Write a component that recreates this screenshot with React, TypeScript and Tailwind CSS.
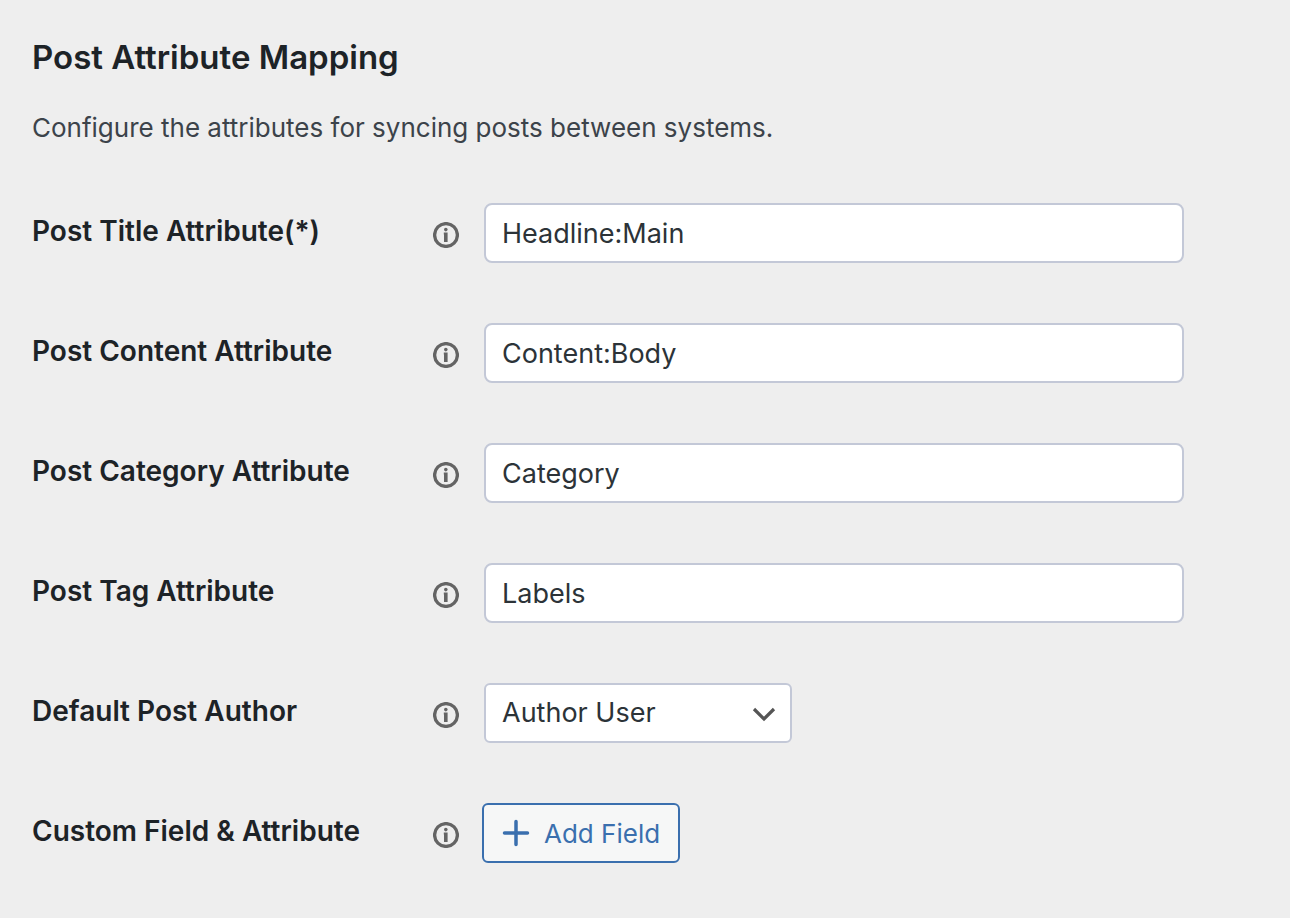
import { useState } from "react";
import type { ReactNode } from "react";

function InfoIcon() {
  return (
    <svg viewBox="0 0 26 26" className="size-[26px]" fill="none" aria-hidden="true">
      <circle cx="13" cy="13" r="11.4" stroke="#646464" strokeWidth="3.3" />
      <circle cx="12.8" cy="7.6" r="1.8" fill="#646464" />
      <path d="M10.8 10.6h3.8V20H11v-7.6h-.2z" fill="#646464" />
    </svg>
  );
}

function Row({ id, label, children }: { id: string; label: string; children: ReactNode }) {
  return (
    <div className="flex h-[60px] items-center">
      <label htmlFor={id} className="w-[400px] shrink-0 pb-1 text-[28px] leading-8 font-semibold text-[#1d2327]">
        {label}
      </label>
      <span className="w-[52px] shrink-0 pt-1 pl-px">
        <InfoIcon />
      </span>
      {children}
    </div>
  );
}

const fields = [
  { id: "title", label: "Post Title Attribute(*)", value: "Headline:Main" },
  { id: "content", label: "Post Content Attribute", value: "Content:Body" },
  { id: "category", label: "Post Category Attribute", value: "Category" },
  { id: "tag", label: "Post Tag Attribute", value: "Labels" },
];

export default function App() {
  const [values, setValues] = useState<Record<string, string>>(
    Object.fromEntries(fields.map((f) => [f.id, f.value])),
  );
  return (
    <main className="min-h-screen bg-[#eeeeee] px-8 pt-9 pb-14 font-['Inter',sans-serif]">
      <h1 className="text-[33px] leading-[42px] font-semibold text-[#1d2327]">Post Attribute Mapping</h1>
      <p className="mt-[34px] text-[26px] leading-8 text-[#3c434a]">
        Configure the attributes for syncing posts between systems.
      </p>
      <form className="mt-[59px] flex flex-col gap-[60px]" onSubmit={(e) => e.preventDefault()}>
        {fields.map((f) => (
          <Row key={f.id} id={f.id} label={f.label}>
            <input
              id={f.id}
              type="text"
              value={values[f.id]}
              onChange={(e) => setValues({ ...values, [f.id]: e.target.value })}
              className="h-[60px] w-full max-w-[700px] rounded-lg border-2 border-[#c3c8d7] bg-white px-4 text-[27px] text-[#2c3338]"
            />
          </Row>
        ))}
        <Row id="author" label="Default Post Author">
          <div className="relative w-[308px]">
            <select
              id="author"
              className="h-[60px] w-full appearance-none rounded-md border-2 border-[#c3c8d7] bg-white px-4 text-[27px] text-[#2c3338]"
            >
              <option>Author User</option>
            </select>
            <svg viewBox="0 0 24 16" className="pointer-events-none absolute top-[23px] right-4 h-4 w-6" fill="none" aria-hidden="true">
              <path d="M2 3l10 10L22 3" stroke="#555555" strokeWidth="3.2" />
            </svg>
          </div>
        </Row>
        <Row id="add-field" label="Custom Field &amp; Attribute">
          <button
            id="add-field"
            type="button"
            className="-ml-0.5 flex h-[60px] items-center gap-3.5 rounded-md border-2 border-[#3a6fae] bg-[#f6f7f7] px-[18px] text-[26px] text-[#3a6fae]"
          >
            <svg viewBox="0 0 28 28" className="size-7" fill="none" aria-hidden="true">
              <path d="M14 2.5v23M2.5 14h23" stroke="#3a6fae" strokeWidth="3.5" strokeLinecap="round" />
            </svg>
            Add Field
          </button>
        </Row>
      </form>
    </main>
  );
}
